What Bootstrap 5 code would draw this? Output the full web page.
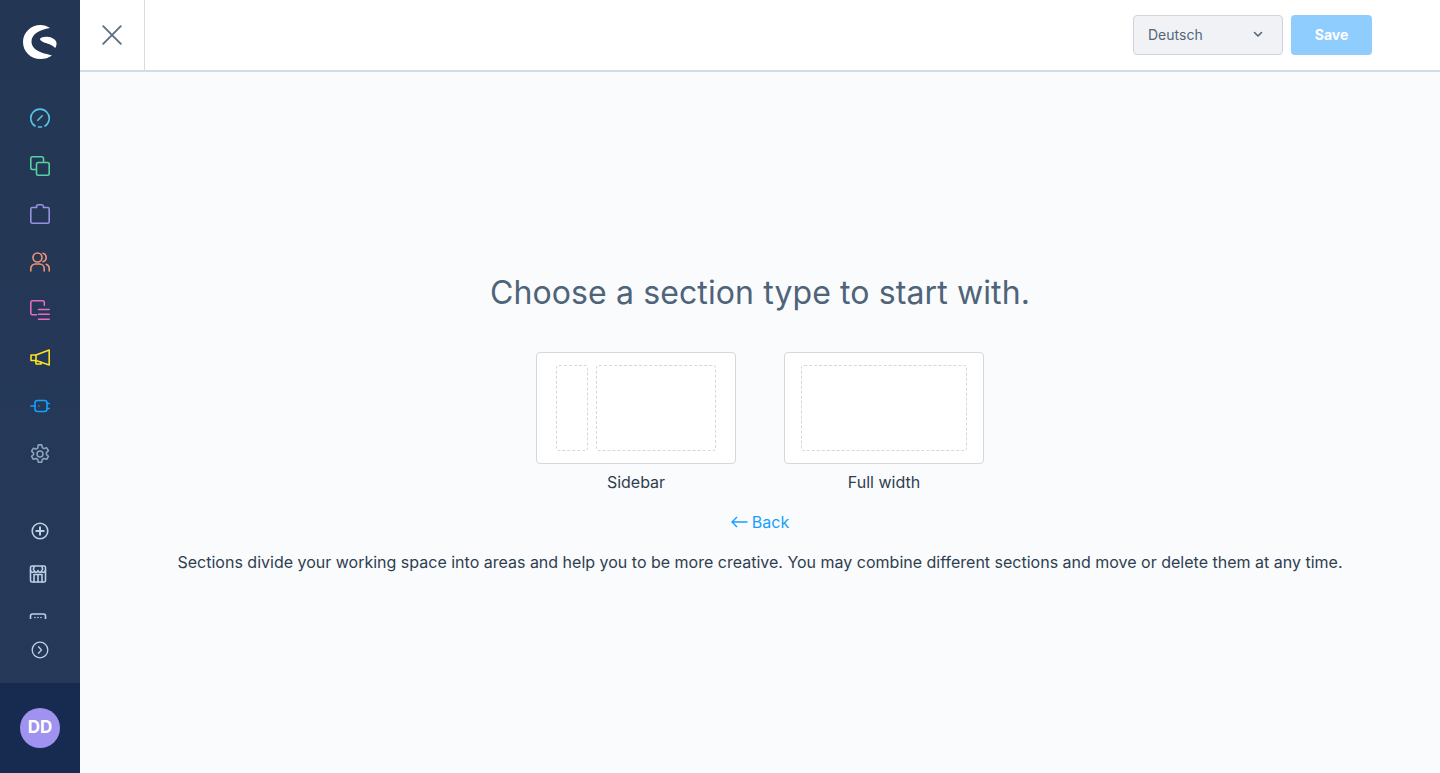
<!DOCTYPE html>
<html lang="en">

<head>
    <meta charset="UTF-8">
    <meta name="viewport" content="width=device-width, initial-scale=1.0">
    <title>Choose a section type</title>
    <link href="https://cdn.jsdelivr.net/npm/bootstrap@5.3.0/dist/css/bootstrap.min.css" rel="stylesheet">
    <style>
        html, body { height: 100%; }
        body { font-family: Inter, "Liberation Sans", sans-serif; background: #f9fbfd; color: #2b3a4b; overflow: hidden; }
        .side-bar { width: 80px; height: 773px; background: linear-gradient(#233754, #26395a); }
        .side-logo { height: 94px; flex: none; }
        .side-item { height: 48px; flex: none; }
        .side-item svg { width: 20px; height: 20px; fill: none; stroke-width: 1.6; stroke-linecap: round; stroke-linejoin: round; }
        .side-sub { height: 141px; flex: none; padding-top: 29px; overflow: hidden; }
        .side-sub .side-item:nth-child(2) { margin-top: -5px; padding-right: 4px; }
        .side-sub .side-item:nth-child(3) { padding-right: 4px; }
        .side-sub svg { stroke: #bcd0e6; width: 18px; height: 18px; }
        .side-toggle { height: 64px; flex: none; padding-bottom: 2px; }
        .side-toggle svg { stroke: #bcd0e6; width: 18px; height: 18px; fill: none; stroke-width: 1.3; stroke-linecap: round; stroke-linejoin: round; }
        .side-foot { height: 90px; flex: none; background: #172a50; }
        .user-dot { width: 40px; height: 40px; background: #a092f0; color: #fff; font-size: 17px; font-weight: 700; }
        .top-bar { height: 72px; background: #fff; border-bottom: 2px solid #d1dce5; padding-right: 68px; }
        .close-box { width: 65px; height: 70px; border-right: 1px solid #d8dce0; }
        .lang-box { width: 150px; height: 40px; background: #f0f2f5; border: 1px solid #d1d5db; border-radius: 4px; padding: 0 19px 2px 14px; font-size: 14px; color: #52667a; }
        .save-btn { width: 81px; height: 40px; padding: 0 0 2px; background: #8fcdff; border: 0; border-radius: 4px; color: #fff; font-size: 14px; font-weight: 700; }
        .work-area { padding-top: 197px; }
        .work-title { font-size: 32px; line-height: 48px; font-weight: 400; letter-spacing: .11px; color: #4f6379; margin: 0 0 35px; }
        .type-row { gap: 48px; }
        .type-box { width: 200px; height: 112px; background: #fff; border: 1px solid #d4d7db; border-radius: 4px; padding: 12px 19px; }
        .type-box.is-full { padding: 12px 16px; }
        .type-slot { border: 1px dashed #d4d7db; border-radius: 3px; height: 100%; }
        .slot-narrow { width: 32px; }
        .type-name { font-size: 16px; line-height: 24px; color: #2f3e50; margin-top: 6px; }
        .back-link { font-size: 16px; line-height: 24px; color: #189eff; margin-top: 16px; text-decoration: none; }
        .back-link svg { width: 17px; height: 12px; fill: none; stroke: #189eff; stroke-width: 1.4; margin-right: 4px; }
        .help-text { font-size: 16px; line-height: 24px; color: #2f3e50; margin: 16px 0 0; }
    </style>
</head>

<body>
    <div class="d-flex">
        <!-- barra lateral -->
        <aside class="side-bar d-flex flex-column flex-shrink-0">
            <div class="side-logo d-flex justify-content-center pt-4">
                <svg width="36" height="36" viewBox="0 0 36 36" fill="#fff">
                    <path d="M28 4C25 2 22 1 18.500 1 9 1 1 8.500 1 18c0 9.500 7.500 17 17.500 17 4.500 0 8-1 11.500-3.500-3.500-1.200-7-1.500-10.500-3C13 26 9.500 22.500 9.500 17.500 9.500 10 18 5.500 28 4z"/>
                    <path d="M18 15c0-1.500 3-2.500 7-2.300 5 .3 9 2.700 9.500 6 .2 1.500-.2 3.500-1.300 5.300-2-2.500-5-3.500-8-4.500-3-1-7-2.500-7.200-4.500z"/>
                </svg>
            </div>
            <div class="side-item d-flex align-items-center justify-content-center">
                <svg viewBox="0 0 20 20" stroke="#57c3e8"><path d="M5 18A9.200 9.200 0 1 1 15 18"/><path d="M8.500 19h3"/><path d="M7.800 12.200l4.400-4.400"/></svg>
            </div>
            <div class="side-item d-flex align-items-center justify-content-center">
                <svg viewBox="0 0 20 20" stroke="#57d1a0"><path d="M5.500 13.500H2.500a1.700 1.700 0 0 1-1.700-1.700V2.500A1.700 1.700 0 0 1 2.500.8h9.300a1.700 1.700 0 0 1 1.700 1.700v3.300"/><rect x="6.500" y="6.500" width="12.700" height="12.700" rx="1.700"/></svg>
            </div>
            <div class="side-item d-flex align-items-center justify-content-center">
                <svg viewBox="0 0 20 20" stroke="#9a90e8"><path d="M6.500 3.500H2.300A1.500 1.500 0 0 0 .8 5v12.700a1.500 1.500 0 0 0 1.500 1.500h15.400a1.500 1.500 0 0 0 1.500-1.500V5a1.500 1.500 0 0 0-1.500-1.500h-4.200"/><path d="M6.500 3.500V2.800A2 2 0 0 1 8.500.8h3a2 2 0 0 1 2 2v.7"/></svg>
            </div>
            <div class="side-item d-flex align-items-center justify-content-center">
                <svg viewBox="0 0 20 20" stroke="#ee9176"><circle cx="7.500" cy="5.500" r="4.500"/><path d="M.8 19v-2.500A4.500 4.500 0 0 1 5.300 12h4.400a4.500 4.500 0 0 1 4.500 4.500V19"/><path d="M13 1.200a4.500 4.500 0 0 1 0 8.600"/><path d="M19.200 19v-2.500a4.500 4.500 0 0 0-3-4.200"/></svg>
            </div>
            <div class="side-item d-flex align-items-center justify-content-center">
                <svg viewBox="0 0 20 20" stroke="#e66bc4"><path d="M6.500 14.800H2.300A1.500 1.500 0 0 1 .8 13.300V2.300A1.500 1.500 0 0 1 2.300.8h10.500a1.500 1.500 0 0 1 1.500 1.500v3"/><path d="M8.500 9.500h10.700M8.500 14.300h10.700M8.500 19.200h10.700"/></svg>
            </div>
            <div class="side-item d-flex align-items-center justify-content-center">
                <svg viewBox="0 0 20 20" stroke="#fbe122"><path d="M6 7L19.200 2v15L6 12.500z"/><path d="M6 7H1v5.500h5"/><path d="M5.500 12.500l.7 3.500h5l-.4-2"/></svg>
            </div>
            <div class="side-item d-flex align-items-center justify-content-center">
                <svg viewBox="0 0 20 20" stroke="#189eff"><rect x="5" y="4.500" width="12" height="11" rx="2.500"/><path d="M.8 10H5M17 7.500h2.200M17 12.500h2.200M9 10h.01"/></svg>
            </div>
            <div class="side-item d-flex align-items-center justify-content-center">
                <svg viewBox="0 0 20 20" stroke="#8ba3bd" stroke-width="1.300"><circle cx="10" cy="10" r="3"/><path d="M8.300.9h3.400l.6 2.700 1.700 1 2.700-.8 1.700 2.900-2 1.900v1.900l2 1.900-1.700 2.900-2.700-.8-1.700 1-.6 2.700H8.300l-.6-2.700-1.700-1-2.700.8-1.700-2.900 2-1.900V9.100l-2-1.900 1.700-2.900 2.700.8 1.700-1z"/></svg>
            </div>
            <div class="side-sub">
                <div class="side-item d-flex align-items-center justify-content-center">
                    <svg viewBox="0 0 18 18"><circle cx="9" cy="9" r="7.800"/><path d="M9 5.300v7.400M5.300 9h7.400" stroke-width="2"/></svg>
                </div>
                <div class="side-item d-flex align-items-center justify-content-center">
                    <svg viewBox="0 0 18 18" stroke-width="1.300"><rect x="1.500" y="1" width="15" height="16" rx="1.500"/><path d="M1.500 5.500c1 2.500 3.500 2.500 3.800 0 .5 2.500 3 2.500 3.700 0 .7 2.500 3.200 2.500 3.700 0 .3 2.500 2.800 2.500 3.800 0M5 17V9.500h8V17M9 9.500V17M5 1.500l-.6 3M13 1.500l.6 3"/></svg>
                </div>
                <div class="side-item d-flex align-items-center justify-content-center">
                    <svg viewBox="0 0 18 18" stroke-width="1.300"><rect x="1.500" y="1" width="15" height="16" rx="2"/><path d="M6 4.500h.01M9 4.500h.01M12 4.500h.01"/></svg>
                </div>
            </div>
            <div class="side-toggle d-flex align-items-center justify-content-center">
                <svg viewBox="0 0 18 18"><circle cx="9" cy="9" r="7.800"/><path d="M7.500 5.800L10.500 9l-3 3.200"/></svg>
            </div>
            <div class="side-foot d-flex align-items-center justify-content-center">
                <div class="user-dot rounded-circle d-flex align-items-center justify-content-center">DD</div>
            </div>
        </aside>

        <main class="flex-grow-1">
            <!-- barra superior -->
            <div class="top-bar d-flex align-items-center">
                <div class="close-box d-flex align-items-center justify-content-center">
                    <svg width="20" height="20" viewBox="0 0 20 20" fill="none" stroke="#5d7083" stroke-width="1.900" stroke-linecap="round"><path d="M1.200 1.200l17.600 17.600M18.800 1.200L1.200 18.800"/></svg>
                </div>
                <div class="ms-auto d-flex gap-2">
                    <div class="lang-box d-flex align-items-center justify-content-between">
                        <span>Deutsch</span>
                        <svg width="10" height="7" viewBox="0 0 10 7" fill="none" stroke="#52667a" stroke-width="1.600" stroke-linecap="round" stroke-linejoin="round"><path d="M1.500 1.500L5 5l3.500-3.500"/></svg>
                    </div>
                    <button type="button" class="save-btn">Save</button>
                </div>
            </div>

            <!-- contenido -->
            <div class="work-area d-flex flex-column align-items-center text-center">
                <h1 class="work-title">Choose a section type to start with.</h1>
                <div class="d-flex justify-content-center type-row">
                    <div class="d-flex flex-column align-items-center">
                        <div class="type-box d-flex gap-2">
                            <div class="type-slot slot-narrow"></div>
                            <div class="type-slot flex-grow-1"></div>
                        </div>
                        <div class="type-name">Sidebar</div>
                    </div>
                    <div class="d-flex flex-column align-items-center">
                        <div class="type-box is-full">
                            <div class="type-slot"></div>
                        </div>
                        <div class="type-name">Full width</div>
                    </div>
                </div>
                <a href="#" class="back-link d-flex align-items-center">
                    <svg viewBox="0 0 17 12"><path d="M16.500 6H1M6 1L1 6l5 5"/></svg>Back
                </a>
                <p class="help-text">Sections divide your working space into areas and help you to be more creative. You may combine different sections and move or delete them at any time.</p>
            </div>
        </main>
    </div>
</body>

</html>
